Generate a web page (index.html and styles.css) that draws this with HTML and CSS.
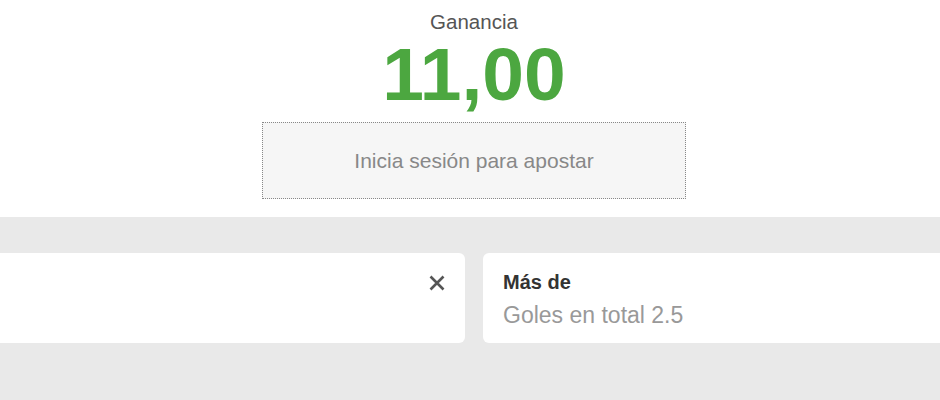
FILE: index.html
```html
<!DOCTYPE html>
<html>
<head>
  <meta charset="utf-8">
  <title>Boleto</title>
  <meta name="viewport" content="width=device-width, initial-scale=1">
  <link rel="stylesheet" href="styles.css">
</head>
<body>
  <div class="stake">
    <div class="stake-label">Ganancia</div>
    <div class="stake-value">11,00</div>
    <div class="login-box">Inicia sesión para apostar</div>
  </div>

  <!-- Selections -->
  <div class="picks">
    <div class="track">
      <div class="card">
        <button class="close" aria-label="Quitar">
          <svg width="18" height="18" viewBox="0 0 18 18"><path d="M2.5 2.5 L15.5 15.5 M15.5 2.5 L2.5 15.5" stroke="#555" stroke-width="2.6" stroke-linecap="butt" fill="none"/></svg>
        </button>
      </div>
      <div class="card">
        <div class="pick-name">Más de</div>
        <div class="pick-market">Goles en total 2.5</div>
      </div>
    </div>
  </div>
</body>
</html>
```

FILE: styles.css
```css
body { margin: 0; font-family: "Liberation Sans", Arial, sans-serif; background: #fff; overflow: hidden; }
.stake { text-align: center; padding: 11px 0 18px 8px; }
.stake-label { font-size: 20.5px; line-height: 21px; color: #555; }
.stake-value { font-size: 75px; line-height: 85px; font-weight: bold; color: #4ca740; }
.login-box { width: 422px; height: 75px; margin: 5px auto 0; background: #f6f6f6; border: 1px dotted #888;
             display: flex; align-items: center; justify-content: center; font-size: 21px; color: #888; }
.picks { background: #e9e9e9; padding: 36px 0 60px; overflow: hidden; }
.track { display: flex; gap: 18px; margin-left: -15px; }
.card { flex: 0 0 480px; height: 90px; box-sizing: border-box; background: #fff; border-radius: 6px;
        padding: 17px 20px; display: flex; flex-direction: column; }
.close { align-self: flex-end; margin: 4px -1px 0 0; padding: 0; border: none; background: none; cursor: pointer; width: 18px; height: 18px; }
.pick-name { font-size: 20px; font-weight: bold; color: #333; line-height: 24px; }
.pick-market { font-size: 23px; color: #999; line-height: 30px; margin-top: 6px; }
```
